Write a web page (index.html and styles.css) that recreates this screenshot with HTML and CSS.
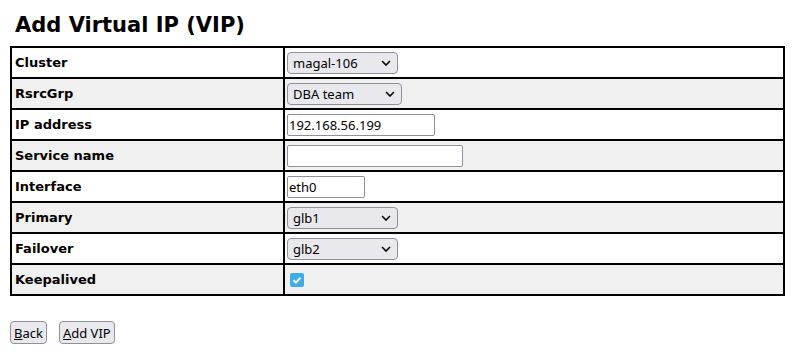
FILE: index.html
```html
<!DOCTYPE html>
<html>
<head>
<meta charset="utf-8">
<link rel="stylesheet" href="styles.css">
</head>
<body>
<h1 class="title">Add Virtual IP (VIP)</h1>
<table class="form">
  <tr><th>Cluster</th><td><select class="sel w111"><option>magal-106</option></select></td></tr>
  <tr class="alt"><th>RsrcGrp</th><td><select class="sel w115"><option>DBA team</option></select></td></tr>
  <tr><th>IP address</th><td><input class="inp w148" type="text" value="192.168.56.199"></td></tr>
  <tr class="alt"><th>Service name</th><td><input class="inp w176" type="text" value=""></td></tr>
  <tr><th>Interface</th><td><input class="inp w78" type="text" value="eth0"></td></tr>
  <tr class="alt"><th>Primary</th><td><select class="sel w111"><option>glb1</option></select></td></tr>
  <tr><th>Failover</th><td><select class="sel w111"><option>glb2</option></select></td></tr>
  <tr class="alt"><th>Keepalived</th><td><input class="chk" type="checkbox" checked></td></tr>
</table>
<div class="actions">
  <button class="btn"><u>B</u>ack</button>
  <button class="btn"><u>A</u>dd VIP</button>
</div>
</body>
</html>
```
FILE: styles.css
```css
body {
  margin: 8px;
  font-family: "DejaVu Sans", sans-serif;
  background: #fff;
  color: #000;
}
.title {
  font-family: "DejaVu Sans", sans-serif;
  font-size: 21px;
  font-weight: bold;
  margin: 0 0 0 7px;
  line-height: 25px;
  padding-top: 5px;
}
.form {
  border-collapse: collapse;
  border: 2px solid #000;
  margin: 8px 0 0 2px;
  width: 775px;
}
.form th, .form td {
  border: 2px solid #000;
  height: 31px;
  padding: 0;
  box-sizing: border-box;
}
.form th {
  width: 273px;
  text-align: left;
  font-size: 13px;
  font-weight: bold;
  padding-left: 3px;
}
.form td {
  padding-left: 2px;
}
.form tr.alt {
  background: #f0f0f0;
}
.sel, .inp, .btn {
  font-family: "Noto Sans", sans-serif;
  font-size: 13px;
  color: #000;
}
.sel {
  -webkit-appearance: none;
  appearance: none;
  height: 22px;
  box-sizing: border-box;
  border: 1px solid #8f8f9d;
  border-radius: 4px;
  background-color: #e9e9ed;
  background-image: url("data:image/svg+xml,%3Csvg xmlns='http://www.w3.org/2000/svg' width='10' height='6' viewBox='0 0 10 6'%3E%3Cpath d='M1 1l4 4 4-4' fill='none' stroke='%23000' stroke-width='1.6'/%3E%3C/svg%3E");
  background-repeat: no-repeat;
  background-position: right 6px center;
  padding: 0 20px 0 5px;
  display: block;
}
.inp {
  -webkit-appearance: none;
  appearance: none;
  height: 22px;
  box-sizing: border-box;
  padding: 0 1px;
  border: 1px solid #8f8f9d;
  border-radius: 2px;
  background: #fff;
  display: block;
}
.w111 { width: 111px; }
.w115 { width: 115px; }
.w148 { width: 148px; }
.w176 { width: 176px; }
.w78 { width: 78px; }
.chk {
  -webkit-appearance: none;
  appearance: none;
  display: block;
  width: 14px;
  height: 14px;
  margin: 0 0 0 3px;
  border-radius: 2px;
  background-color: #3daee9;
  background-image: url("data:image/svg+xml,%3Csvg xmlns='http://www.w3.org/2000/svg' width='14' height='14' viewBox='0 0 14 14'%3E%3Cpath d='M3.5 7.2l2.4 2.4 4.6-5' fill='none' stroke='%23fff' stroke-width='2'/%3E%3C/svg%3E");
  background-repeat: no-repeat;
}
.actions {
  margin: 25px 0 0 2px;
  display: flex;
  gap: 12px;
}
.btn {
  -webkit-appearance: none;
  appearance: none;
  height: 23px;
  padding: 0 3px;
  border: 1px solid #8f8f9d;
  border-radius: 4px;
  background: #e9e9ed;
  line-height: 20px;
  font-size: 13px;
}
```
